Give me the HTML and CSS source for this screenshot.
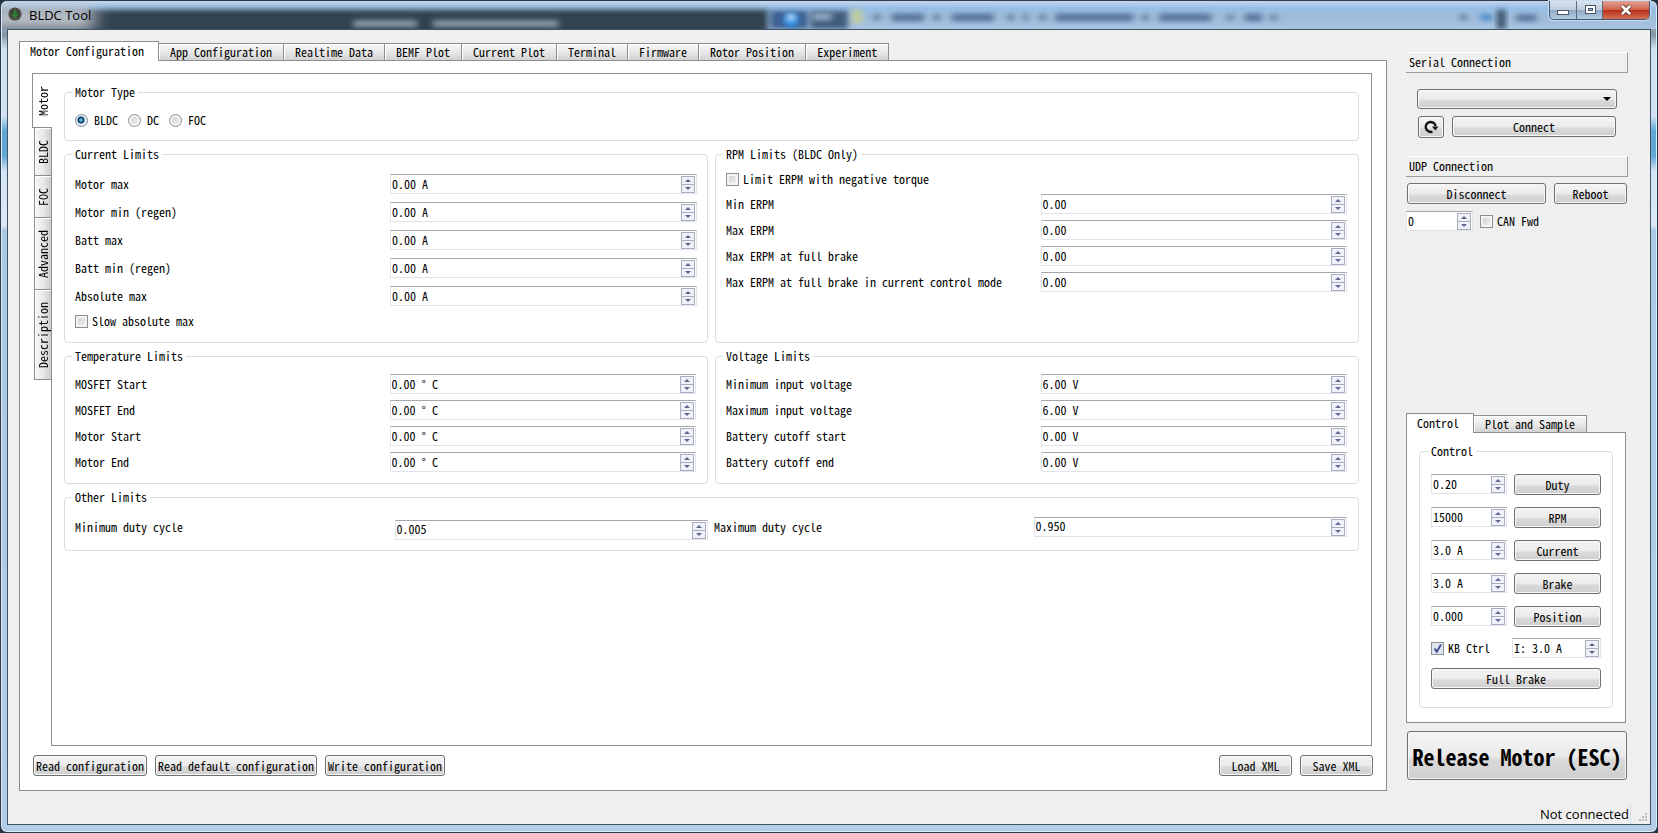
FILE: index.html
```html
<!DOCTYPE html>
<html lang="en">
<head>
<meta charset="utf-8">
<title>BLDC Tool</title>
<link rel="stylesheet" href="styles.css">
</head>
<body>
<div class="window">
  <header class="titlebar">
    <svg class="glass" viewBox="0 0 1658 29" preserveAspectRatio="none" aria-hidden="true">
      <defs>
        <filter id="soft" x="-10%" y="-60%" width="120%" height="220%"><feGaussianBlur stdDeviation="3"/></filter>
        <filter id="haze" x="-40%" y="-100%" width="180%" height="300%"><feGaussianBlur stdDeviation="3"/></filter>
        <filter id="glow" x="-40%" y="-100%" width="180%" height="300%"><feGaussianBlur stdDeviation="9"/></filter>
      </defs>
      <rect x="-20" y="9" width="788" height="30" fill="#33424f" filter="url(#soft)"/>
      <rect x="-40" y="4" width="132" height="26" fill="#c6ccd3" filter="url(#glow)"/>
      <rect x="352" y="20" width="64" height="7" fill="#8a9cac" filter="url(#haze)"/>
      <rect x="432" y="20" width="126" height="7" fill="#8a9cac" filter="url(#haze)"/>
      <rect x="810" y="10" width="38" height="19" fill="#3f5b7c" filter="url(#haze)"/>
      <rect x="770" y="10" width="38" height="19" fill="#3c5f8e" filter="url(#haze)"/>
      <circle cx="791" cy="20" r="8" fill="#2f8be0" filter="url(#haze)"/>
      <circle cx="791" cy="17" r="4" fill="#c8e4ff" filter="url(#haze)"/>
      <rect x="812" y="12" width="20" height="8" fill="#8fa9c2" filter="url(#haze)"/>
      <rect x="852" y="9" width="10" height="14" fill="#c2cf9a" filter="url(#haze)"/>
      <g fill="#55759a" filter="url(#haze)">
        <rect x="874" y="14" width="6" height="6"/><rect x="892" y="13" width="32" height="8"/>
        <rect x="934" y="14" width="6" height="6"/><rect x="952" y="13" width="42" height="8"/>
        <rect x="1008" y="14" width="6" height="6"/><rect x="1024" y="13" width="4" height="8"/>
        <rect x="1040" y="14" width="6" height="6"/><rect x="1056" y="13" width="78" height="8"/>
        <rect x="1143" y="14" width="6" height="6"/><rect x="1160" y="13" width="52" height="8"/>
        <rect x="1228" y="14" width="6" height="6"/><rect x="1246" y="13" width="17" height="8"/>
        <rect x="1272" y="14" width="6" height="6"/><rect x="1462" y="14" width="6" height="6"/>
        <rect x="1518" y="14" width="20" height="7"/>
      </g>
      <rect x="1482" y="14" width="12" height="6" fill="#4287ca" filter="url(#haze)"/>
      <rect x="1499" y="9" width="8" height="20" fill="#30485f" filter="url(#haze)"/>
    </svg>
    <svg class="app-icon" viewBox="0 0 16 16" aria-hidden="true">
      <circle cx="8" cy="8" r="7.5" fill="#4b4743"/>
      <circle cx="8" cy="8" r="6" fill="none" stroke="#6d6259" stroke-dasharray="1.5 1.5"/>
      <circle cx="8" cy="8" r="4.5" fill="#26402a"/>
      <path d="M8 3.500 5 9.500h6zM8 5.500v6M5.500 11.500h5" fill="none" stroke="#3f9a45"/>
    </svg>
    <h1 class="title">BLDC Tool</h1>
    <div class="win-buttons">
      <button type="button" class="win-btn min" aria-label="Minimize"><svg viewBox="0 0 14 12"><rect x="1.500" y="6.500" width="11" height="4" fill="#fff" stroke="#4b5563"/></svg></button>
      <button type="button" class="win-btn max" aria-label="Maximize"><svg viewBox="0 0 14 12"><rect x="2.500" y="1.500" width="10" height="8" fill="#fff" stroke="#4b5563"/><rect x="5.500" y="4.500" width="4" height="2" fill="#a9bfd8" stroke="#4b5563"/></svg></button>
      <button type="button" class="win-btn close" aria-label="Close"><svg viewBox="0 0 14 12"><path d="M3 2l8 8M11 2l-8 8" stroke="#5a3030" stroke-width="4.500"/><path d="M3 2l8 8M11 2l-8 8" stroke="#fff" stroke-width="2.600"/></svg></button>
    </div>
  </header>

  <div class="client">
    <main class="main">
      <div class="tabs" role="tablist">
        <button type="button" role="tab" class="tab active" aria-selected="true">Motor Configuration</button>
        <button type="button" role="tab" class="tab">App Configuration</button>
        <button type="button" role="tab" class="tab">Realtime Data</button>
        <button type="button" role="tab" class="tab">BEMF Plot</button>
        <button type="button" role="tab" class="tab">Current Plot</button>
        <button type="button" role="tab" class="tab">Terminal</button>
        <button type="button" role="tab" class="tab">Firmware</button>
        <button type="button" role="tab" class="tab">Rotor Position</button>
        <button type="button" role="tab" class="tab">Experiment</button>
      </div>
      <div class="panel">
        <div class="config">
          <div class="vtabs" role="tablist" aria-orientation="vertical">
            <button type="button" role="tab" class="vtab active" aria-selected="true"><span>Motor</span></button>
            <button type="button" role="tab" class="vtab"><span>BLDC</span></button>
            <button type="button" role="tab" class="vtab"><span>FOC</span></button>
            <button type="button" role="tab" class="vtab"><span>Advanced</span></button>
            <button type="button" role="tab" class="vtab"><span>Description</span></button>
          </div>
          <div class="page">
            <fieldset class="group radios">
              <legend>Motor Type</legend>
              <div class="radio-row">
                <label class="check"><input type="radio" name="type" checked>BLDC</label>
                <label class="check"><input type="radio" name="type">DC</label>
                <label class="check"><input type="radio" name="type">FOC</label>
              </div>
            </fieldset>

            <fieldset class="group roomy">
              <legend>Current Limits</legend>
              <div class="rows">
                <div class="row"><label for="motor-max">Motor max</label><span class="spin"><input id="motor-max" type="text" value="0.00 A"><span class="steps"><button type="button" class="up" aria-label="Up"></button><button type="button" class="down" aria-label="Down"></button></span></span></div>
                <div class="row"><label for="motor-min">Motor min (regen)</label><span class="spin"><input id="motor-min" type="text" value="0.00 A"><span class="steps"><button type="button" class="up" aria-label="Up"></button><button type="button" class="down" aria-label="Down"></button></span></span></div>
                <div class="row"><label for="batt-max">Batt max</label><span class="spin"><input id="batt-max" type="text" value="0.00 A"><span class="steps"><button type="button" class="up" aria-label="Up"></button><button type="button" class="down" aria-label="Down"></button></span></span></div>
                <div class="row"><label for="batt-min">Batt min (regen)</label><span class="spin"><input id="batt-min" type="text" value="0.00 A"><span class="steps"><button type="button" class="up" aria-label="Up"></button><button type="button" class="down" aria-label="Down"></button></span></span></div>
                <div class="row"><label for="abs-max">Absolute max</label><span class="spin"><input id="abs-max" type="text" value="0.00 A"><span class="steps"><button type="button" class="up" aria-label="Up"></button><button type="button" class="down" aria-label="Down"></button></span></span></div>
                <label class="check"><input type="checkbox">Slow absolute max</label>
              </div>
            </fieldset>

            <fieldset class="group">
              <legend>RPM Limits (BLDC Only)</legend>
              <div class="rows">
                <label class="check lead"><input type="checkbox">Limit ERPM with negative torque</label>
                <div class="row"><label for="min-erpm">Min ERPM</label><span class="spin"><input id="min-erpm" type="text" value="0.00"><span class="steps"><button type="button" class="up" aria-label="Up"></button><button type="button" class="down" aria-label="Down"></button></span></span></div>
                <div class="row"><label for="max-erpm">Max ERPM</label><span class="spin"><input id="max-erpm" type="text" value="0.00"><span class="steps"><button type="button" class="up" aria-label="Up"></button><button type="button" class="down" aria-label="Down"></button></span></span></div>
                <div class="row"><label for="max-fb">Max ERPM at full brake</label><span class="spin"><input id="max-fb" type="text" value="0.00"><span class="steps"><button type="button" class="up" aria-label="Up"></button><button type="button" class="down" aria-label="Down"></button></span></span></div>
                <div class="row"><label for="max-fbcc">Max ERPM at full brake in current control mode</label><span class="spin"><input id="max-fbcc" type="text" value="0.00"><span class="steps"><button type="button" class="up" aria-label="Up"></button><button type="button" class="down" aria-label="Down"></button></span></span></div>
              </div>
            </fieldset>

            <fieldset class="group">
              <legend>Temperature Limits</legend>
              <div class="rows">
                <div class="row"><label for="mos-start">MOSFET Start</label><span class="spin"><input id="mos-start" type="text" value="0.00 ° C"><span class="steps"><button type="button" class="up" aria-label="Up"></button><button type="button" class="down" aria-label="Down"></button></span></span></div>
                <div class="row"><label for="mos-end">MOSFET End</label><span class="spin"><input id="mos-end" type="text" value="0.00 ° C"><span class="steps"><button type="button" class="up" aria-label="Up"></button><button type="button" class="down" aria-label="Down"></button></span></span></div>
                <div class="row"><label for="mot-start">Motor Start</label><span class="spin"><input id="mot-start" type="text" value="0.00 ° C"><span class="steps"><button type="button" class="up" aria-label="Up"></button><button type="button" class="down" aria-label="Down"></button></span></span></div>
                <div class="row"><label for="mot-end">Motor End</label><span class="spin"><input id="mot-end" type="text" value="0.00 ° C"><span class="steps"><button type="button" class="up" aria-label="Up"></button><button type="button" class="down" aria-label="Down"></button></span></span></div>
              </div>
            </fieldset>

            <fieldset class="group">
              <legend>Voltage Limits</legend>
              <div class="rows">
                <div class="row"><label for="v-min">Minimum input voltage</label><span class="spin"><input id="v-min" type="text" value="6.00 V"><span class="steps"><button type="button" class="up" aria-label="Up"></button><button type="button" class="down" aria-label="Down"></button></span></span></div>
                <div class="row"><label for="v-max">Maximum input voltage</label><span class="spin"><input id="v-max" type="text" value="6.00 V"><span class="steps"><button type="button" class="up" aria-label="Up"></button><button type="button" class="down" aria-label="Down"></button></span></span></div>
                <div class="row"><label for="cut-start">Battery cutoff start</label><span class="spin"><input id="cut-start" type="text" value="0.00 V"><span class="steps"><button type="button" class="up" aria-label="Up"></button><button type="button" class="down" aria-label="Down"></button></span></span></div>
                <div class="row"><label for="cut-end">Battery cutoff end</label><span class="spin"><input id="cut-end" type="text" value="0.00 V"><span class="steps"><button type="button" class="up" aria-label="Up"></button><button type="button" class="down" aria-label="Down"></button></span></span></div>
              </div>
            </fieldset>

            <fieldset class="group other">
              <legend>Other Limits</legend>
              <div class="duty">
                <label for="duty-min">Minimum duty cycle</label><span class="spin low"><input id="duty-min" type="text" value="0.005"><span class="steps"><button type="button" class="up" aria-label="Up"></button><button type="button" class="down" aria-label="Down"></button></span></span>
                <label for="duty-max">Maximum duty cycle</label><span class="spin"><input id="duty-max" type="text" value="0.950"><span class="steps"><button type="button" class="up" aria-label="Up"></button><button type="button" class="down" aria-label="Down"></button></span></span>
              </div>
            </fieldset>
          </div>
        </div>
        <div class="actions">
          <button type="button" class="btn">Read configuration</button>
          <button type="button" class="btn">Read default configuration</button>
          <button type="button" class="btn">Write configuration</button>
          <button type="button" class="btn wide push">Load XML</button>
          <button type="button" class="btn wide">Save XML</button>
        </div>
      </div>
    </main>

    <aside class="side">
      <h2 class="caption">Serial Connection</h2>
      <div class="serial">
        <div class="combo"><select class="btn" aria-label="Serial port"><option></option></select></div>
        <div class="serial-row">
          <button type="button" class="btn refresh" aria-label="Refresh"><svg viewBox="0 0 16 16"><path d="M9.500 12.600A5 5 0 1 1 12.600 7" fill="none" stroke="#111" stroke-width="2.400"/><path d="M9 7.500h6.500L12.200 11.500z" fill="#111"/></svg></button>
          <button type="button" class="btn grow">Connect</button>
        </div>
      </div>
      <h2 class="caption">UDP Connection</h2>
      <div class="udp">
        <div class="udp-row"><button type="button" class="btn grow">Disconnect</button><button type="button" class="btn wide">Reboot</button></div>
        <div class="can-row">
          <span class="spin can"><input type="text" value="0" aria-label="CAN id"><span class="steps"><button type="button" class="up" aria-label="Up"></button><button type="button" class="down" aria-label="Down"></button></span></span>
          <label class="check"><input type="checkbox">CAN Fwd</label>
        </div>
      </div>

      <div class="control">
        <div class="tabs" role="tablist">
          <button type="button" role="tab" class="tab active" aria-selected="true">Control</button>
          <button type="button" role="tab" class="tab">Plot and Sample</button>
        </div>
        <div class="control-panel">
          <fieldset class="group control-group">
            <legend>Control</legend>
            <div class="control-rows">
              <div class="crow"><span class="spin"><input type="text" value="0.20" aria-label="Duty value"><span class="steps"><button type="button" class="up" aria-label="Up"></button><button type="button" class="down" aria-label="Down"></button></span></span><button type="button" class="btn">Duty</button></div>
              <div class="crow"><span class="spin"><input type="text" value="15000" aria-label="RPM value"><span class="steps"><button type="button" class="up" aria-label="Up"></button><button type="button" class="down" aria-label="Down"></button></span></span><button type="button" class="btn">RPM</button></div>
              <div class="crow"><span class="spin"><input type="text" value="3.0 A" aria-label="Current value"><span class="steps"><button type="button" class="up" aria-label="Up"></button><button type="button" class="down" aria-label="Down"></button></span></span><button type="button" class="btn">Current</button></div>
              <div class="crow"><span class="spin"><input type="text" value="3.0 A" aria-label="Brake value"><span class="steps"><button type="button" class="up" aria-label="Up"></button><button type="button" class="down" aria-label="Down"></button></span></span><button type="button" class="btn">Brake</button></div>
              <div class="crow"><span class="spin"><input type="text" value="0.000" aria-label="Position value"><span class="steps"><button type="button" class="up" aria-label="Up"></button><button type="button" class="down" aria-label="Down"></button></span></span><button type="button" class="btn">Position</button></div>
            </div>
            <div class="kb-row">
              <label class="check"><input type="checkbox" checked>KB Ctrl</label>
              <span class="spin"><input type="text" value="I: 3.0 A" aria-label="Keyboard current"><span class="steps"><button type="button" class="up" aria-label="Up"></button><button type="button" class="down" aria-label="Down"></button></span></span>
            </div>
            <button type="button" class="btn full">Full Brake</button>
          </fieldset>
        </div>
      </div>
      <button type="button" class="btn release">Release Motor (ESC)</button>
    </aside>

    <footer class="status">
      <span class="status-text">Not connected</span>
      <svg class="grip" viewBox="0 0 9 9" aria-hidden="true"><path d="M6 0h2v2H6zM3 3h2v2H3zM6 3h2v2H6zM0 6h2v2H0zM3 6h2v2H3zM6 6h2v2H6z" fill="#bdbdbd"/></svg>
    </footer>
  </div>
</div>
</body>
</html>
```
FILE: styles.css
```css
* { box-sizing: border-box; }

body {
  margin: 0;
  background: #26323f;
  color: #000;
  font: 12px/12px "Noto Sans Mono CJK SC", "Noto Sans CJK SC", "Liberation Mono", monospace;
}

button, input, select { font: inherit; color: inherit; margin: 0; }
h1, h2 { margin: 0; font: inherit; }

/* window frame */
.window {
  min-height: 100vh;
  display: flex;
  flex-direction: column;
  padding: 0 7px 7px;
  border: 1px solid #2c3a4b;
  border-radius: 7px;
  background: linear-gradient(#d5e3f2 0, #8595a6 34px, #d3e2f2 48px, #d3e2f2 115px, #62a8d6 130px, #62a8d6 155px, #d3e2f2 170px, #dce8f5 225px, #abc8e5 229px, #b3cde7 100%);
  box-shadow: inset 0 0 0 1px #dcebf8;
}

.titlebar {
  position: relative;
  display: flex;
  align-items: flex-start;
  height: 28px;
}

.glass {
  position: absolute;
  top: 0;
  left: -6px;
  width: calc(100% + 12px);
  height: 28px;
  border-radius: 6px 6px 0 0;
  background: linear-gradient(#c3d6ec, #98bfe6 7px, #9ebbd9 16px, #a9c5e2);
}

.app-icon { position: relative; width: 14px; height: 14px; margin-top: 6px; }
.title {
  position: relative;
  flex: 1;
  margin-left: 7px;
  font: 13px/28px "Open Sans", sans-serif;
}

.win-buttons {
  position: relative;
  display: flex;
  border: 1px solid #44566b;
  border-top: 0;
  border-radius: 0 0 5px 5px;
  overflow: hidden;
  box-shadow: 0 0 0 1px #c8ddf2;
}
.win-btn {
  width: 27px;
  height: 18px;
  padding: 0;
  border: 0;
  border-right: 1px solid #5a6c82;
  background: linear-gradient(#d9e4f0, #bccddf 9px, #8fa9c5 9px, #b3cbe2);
}
.win-btn svg { display: block; width: 14px; height: 12px; margin: 0 auto; }
.win-btn.max { width: 26px; }
.win-btn.close {
  width: 46px;
  border-right: 0;
  background: linear-gradient(#e4a397, #d0604b 9px, #b82d15 9px, #d3705a);
}

.client {
  flex: 1;
  display: grid;
  grid-template-columns: minmax(0, 1fr) 222px;
  grid-template-rows: 1fr 33px;
  column-gap: 19px;
  padding: 0 22px 0 11px;
  background: #efefef;
  border: 1px solid #3f5367;
  margin: 0 -1px;
}

/* tabs */
.main { display: flex; flex-direction: column; padding-top: 11px; }
.tabs { display: flex; align-items: flex-end; height: 20px; padding-bottom: 1px; }
.tab {
  height: 17px;
  margin-left: -1px;
  padding: 0 11px;
  border: 1px solid #8c8e92;
  border-bottom: 0;
  background: linear-gradient(#f6f6f6, #e9e9e9 50%, #d2d2d2);
  box-shadow: inset 1px 1px #fff;
  white-space: nowrap;
}
.tab.active {
  position: relative;
  height: 20px;
  margin: 0 0 -1px;
  padding: 0 14px 2px 10px;
  background: #fff;
  box-shadow: none;
}
.panel {
  flex: 1;
  display: flex;
  flex-direction: column;
  gap: 9px;
  margin-top: -1px;
  padding: 12px 14px 14px 12px;
  border: 1px solid #8c8e92;
  background: #fff;
}
.config { flex: 1; display: flex; }
.vtabs { display: flex; flex-direction: column; align-items: flex-end; width: 19px; }
.vtab {
  width: 17px;
  margin-top: -1px;
  padding: 12px 0 11px;
  border: 1px solid #8c8e92;
  border-right: 0;
  background: linear-gradient(to right, #f6f6f6, #e9e9e9 50%, #cdcdcd);
  box-shadow: inset 1px 1px #fff;
}
.vtab span { display: block; margin: 0 auto; writing-mode: vertical-rl; transform: rotate(180deg); }
.vtab.active {
  position: relative;
  width: 20px;
  margin: 0 -1px 0 0;
  background: #fff;
  box-shadow: none;
}

.page {
  flex: 1;
  display: grid;
  grid-template-columns: 1fr 1fr;
  align-content: start;
  gap: 7px;
  padding: 12px;
  border: 1px solid #8c8e92;
}

/* group boxes */
.group {
  min-width: 0;
  margin: 0;
  padding: 12px 11px 11px 10px;
  border: 1px solid #dcdcdc;
  border-radius: 4px;
}
.group legend { margin-left: -3px; padding: 0 3px; }
.radios { grid-column: 1 / -1; padding: 15px 10px 13px; }
.roomy { padding: 14px 10px; }
.other { grid-column: 1 / -1; padding: 14px 11px 10px 10px; }

.rows { display: grid; gap: 6px; }
.roomy .rows { gap: 8px; }
.lead { margin-bottom: 2px; }
.row { display: grid; grid-template-columns: 1fr 1fr; gap: 8px; align-items: center; }
.row label { white-space: nowrap; }
.duty { display: grid; grid-template-columns: repeat(4, 1fr); gap: 6px; height: 23px; line-height: 20px; }
.low { align-self: end; }

.radio-row { display: flex; gap: 10px; }
.check { display: flex; align-items: center; gap: 4px; height: 14px; white-space: nowrap; }
.radio-row .check { gap: 6px; }

.check input {
  appearance: none;
  width: 13px;
  height: 13px;
  border: 1px solid #8e8f8f;
  background: linear-gradient(135deg, #c9ccd0, #f6f6f6);
  box-shadow: inset 0 0 0 2px #f4f4f4;
}
.check input[type="radio"] { border-radius: 50%; }
.check input[type="radio"]:checked {
  border-color: #7d8b98;
  background: radial-gradient(circle at 5px 5px, #8fdcf8 0, #1c6ea0 2px, #0b2f4f 3px, #e4eef5 4px);
  box-shadow: none;
}
.check input[type="checkbox"]:checked {
  background: #dfe6f2 url("data:image/svg+xml,%3Csvg xmlns='http://www.w3.org/2000/svg' viewBox='0 0 11 11'%3E%3Cpath d='M2.500 5.500 4.800 8.800 9 1.500' fill='none' stroke='%23384a8c' stroke-width='1.800'/%3E%3C/svg%3E");
  box-shadow: none;
}

/* spin boxes */
.spin {
  display: flex;
  min-width: 0;
  height: 20px;
  padding: 1px;
  border: 1px solid #e2e3ea;
  border-top-color: #a5a7ac;
  background: #fff;
}
.spin input {
  flex: 1;
  min-width: 0;
  width: 0;
  padding: 0 0 2px;
  border: 0;
  background: none;
  outline: 0;
}
.steps { display: flex; flex-direction: column; width: 14px; height: 17px; }
.steps button {
  flex: 1;
  display: grid;
  place-items: center;
  padding: 0;
  border: 1px solid #a9adc0;
  background: #f0f2f9;
}
.steps .down { margin-top: -1px; }
.steps button::before { content: ""; border: 3px solid transparent; }
.steps .up::before { border-top: 0; border-bottom-color: #5e6890; }
.steps .down::before { border-bottom: 0; border-top-color: #5e6890; }

/* push buttons */
.btn {
  height: 21px;
  padding: 0 2px;
  border: 1px solid #707070;
  border-radius: 3px;
  background: linear-gradient(#f4f4f4, #ebebeb 50%, #d9d9d9 60%, #cfcfcf);
  box-shadow: inset 0 0 0 1px #f8f8f8;
  white-space: nowrap;
}
.wide { width: 73px; }
.grow { flex: 1; }
.push { margin-left: auto; }
.actions { display: flex; gap: 8px; margin: 0 -1px 0 1px; }

/* side bar */
.side { display: flex; flex-direction: column; padding: 22px 0 11px; }
.caption {
  height: 21px;
  padding-left: 3px;
  line-height: 18px;
  border: 1px solid #fff;
  border-left: 0;
  border-right-color: #9c9c9c;
  border-bottom-color: #9c9c9c;
}
.serial { display: grid; gap: 7px; padding: 16px 11px 18px; }
.combo { position: relative; display: grid; }
.combo::after {
  content: "";
  position: absolute;
  top: 8px;
  right: 6px;
  border: 4px solid transparent;
  border-top-color: #000;
  border-bottom: 0;
}
.combo select { appearance: none; height: 20px; }
.serial-row { display: flex; gap: 8px; padding: 0 1px; }
.refresh { display: grid; place-items: center; width: 26px; height: 22px; }
.refresh svg { width: 16px; height: 16px; }
.udp { display: grid; gap: 7px; padding-top: 6px; }
.udp-row { display: flex; gap: 8px; padding: 0 1px; }
.can-row { display: flex; align-items: center; gap: 7px; }
.can { width: 67px; }

.control { margin-top: auto; }
.control-panel {
  margin: -1px 2px 0 0;
  padding: 12px 12px 14px;
  border: 1px solid #8c8e92;
  background: #fff;
}
.control-group { padding: 17px 11px 18px; }
.control-rows { display: grid; gap: 12px; }
.crow { display: grid; grid-template-columns: 76px 1fr; gap: 7px; }
.kb-row { display: flex; align-items: center; justify-content: space-between; margin: 11px 0 10px; }
.kb-row .spin { width: 89px; }
.full { width: 100%; }
.release { height: 49px; margin: 8px 1px 0; font-size: 22px; font-weight: 700; }

.status {
  grid-column: 1 / -1;
  display: flex;
  justify-content: flex-end;
  align-items: center;
  gap: 8px;
  margin-right: -20px;
  padding-top: 12px;
  font: 13px/20px "Open Sans", sans-serif;
}
.status-text { padding-right: 1px; border-right: 1px solid #d5dde5; }
.grip { width: 9px; height: 9px; align-self: flex-end; margin-bottom: 2px; }
```
